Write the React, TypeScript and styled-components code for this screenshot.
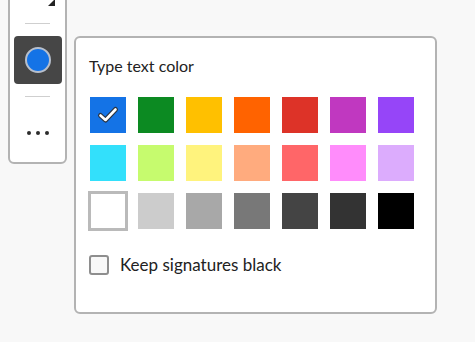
import React from "react";
import styled, { createGlobalStyle } from "styled-components";

const Global = createGlobalStyle`
  html, body { margin: 0; padding: 0; background: #f8f8f8; }
  body { font-family: "Lato", "Open Sans", "Noto Sans", sans-serif; }
  * { box-sizing: border-box; }
`;

const Page = styled.div`
  display: flex;
  align-items: flex-start;
  padding-left: 8px;
  width: 475px;
  height: 342px;
  overflow: hidden;
`;

const Toolbar = styled.div`
  width: 59px;
  margin-top: -39px;
  background: #fff;
  border: 2px solid #b3b3b3;
  border-radius: 6px;
  display: flex;
  flex-direction: column;
  align-items: center;
  padding: 0 0 5px;
`;

const ToolButton = styled.div<{ $active?: boolean }>`
  position: relative;
  width: 48px;
  height: 48px;
  border-radius: 4px;
  background: ${(p) => (p.$active ? "#464646" : "transparent")};
  display: flex;
  align-items: center;
  justify-content: center;
  gap: 5px;
`;

const CornerTriangle = styled.span`
  position: absolute;
  right: 7px;
  bottom: 5px;
  width: 0;
  height: 0;
  border-left: 7px solid transparent;
  border-bottom: 7px solid #222;
`;

const Separator = styled.div`
  width: 25px;
  height: 1px;
  background: #cfcfcf;
  margin: 12px 0;
`;

const ColorDot = styled.span<{ $color: string }>`
  width: 26px;
  height: 26px;
  border-radius: 50%;
  background: ${(p) => p.$color};
  border: 2px solid #b7bfcc;
`;

const Dot = styled.span`
  width: 4px;
  height: 4px;
  border-radius: 50%;
  background: #2c2c2c;
`;

const Popup = styled.div`
  margin-left: 7px;
  margin-top: 36px;
  width: 363px;
  height: 278px;
  background: #fff;
  border: 2px solid #b3b3b3;
  border-radius: 6px;
  padding: 18px 0 0 14px;
  display: flex;
  flex-direction: column;
`;

const Title = styled.div`
  font-size: 16px;
  line-height: 20px;
  color: #222;
  margin-left: -1px;
`;

const Grid = styled.div`
  margin-top: 21px;
  display: grid;
  grid-template-columns: repeat(7, 36px);
  grid-auto-rows: 36px;
  gap: 12px;
`;

const Swatch = styled.div<{ $color: string; $outlined?: boolean }>`
  position: relative;
  width: 36px;
  height: 36px;
  background: ${(p) => p.$color};
  box-shadow: ${(p) =>
    p.$outlined ? "0 0 0 2px #bababa, inset 0 0 0 1px #bababa" : "none"};
  display: flex;
  align-items: center;
  justify-content: center;
`;

const CheckRow = styled.label`
  margin-top: 26px;
  display: flex;
  align-items: center;
  gap: 11px;
  margin-left: -1px;
`;

const CheckBox = styled.span`
  width: 20px;
  height: 20px;
  border: 2px solid #8e8e8e;
  border-radius: 3px;
  background: #f8f8f8;
`;

const CheckLabel = styled.span`
  font-size: 17px;
  color: #222;
  line-height: 20px;
`;

const colors: string[] = [
  "#1473e6", "#0c8a22", "#ffc000", "#ff6300", "#dd3328", "#c038c0", "#9645f8",
  "#33e0fb", "#c6fb6e", "#fff37d", "#ffab7e", "#ff6668", "#ff8cfb", "#dcacfd",
  "#ffffff", "#cccccc", "#a8a8a8", "#787878", "#444444", "#333333", "#000000",
];

const Check = () => (
  <svg width="36" height="36" viewBox="0 0 36 36">
    <path d="M10.5 18.5 L15.5 23 L25.5 12.5" fill="none" stroke="#2a3340" strokeWidth="5" strokeLinecap="round" strokeLinejoin="round" />
    <path d="M10.5 18.5 L15.5 23 L25.5 12.5" fill="none" stroke="#fff" strokeWidth="2.6" strokeLinecap="round" strokeLinejoin="round" />
  </svg>
);

export default function App() {
  return (
    <>
      <Global />
      <Page>
        <Toolbar>
          <ToolButton>
            <CornerTriangle />
          </ToolButton>
          <Separator />
          <ToolButton $active>
            <ColorDot $color="#1473e6" />
          </ToolButton>
          <Separator />
          <ToolButton>
            <Dot />
            <Dot />
            <Dot />
          </ToolButton>
        </Toolbar>
        <Popup>
          <Title>Type text color</Title>
          <Grid>
            {colors.map((c, i) => (
              <Swatch key={i} $color={c} $outlined={c === "#ffffff"}>
                {i === 0 && <Check />}
              </Swatch>
            ))}
          </Grid>
          <CheckRow>
            <CheckBox />
            <CheckLabel>Keep signatures black</CheckLabel>
          </CheckRow>
        </Popup>
      </Page>
    </>
  );
}
